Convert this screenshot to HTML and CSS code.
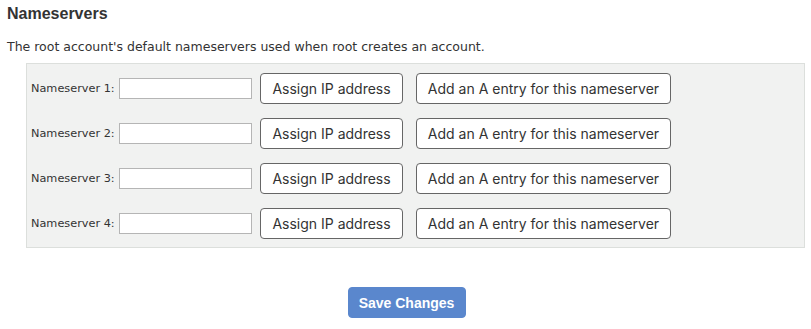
FILE: index.html
```html
<!DOCTYPE html>
<html lang="en">
<head>
    <meta charset="UTF-8">
    <title>Nameservers</title>
    <link rel="stylesheet" href="styles.css">
</head>
<body>
    <h2 class="section-title">Nameservers</h2>
    <p class="section-desc">The root account's default nameservers used when root creates an account.</p>

    <div class="ns-panel">
        <div class="ns-row">
            <label class="ns-label" for="ns1">Nameserver 1:</label>
            <input class="ns-input" id="ns1" type="text">
            <button class="btn" type="button">Assign IP address</button>
            <button class="btn btn-wide" type="button">Add an A entry for this nameserver</button>
        </div>
        <div class="ns-row">
            <label class="ns-label" for="ns2">Nameserver 2:</label>
            <input class="ns-input" id="ns2" type="text">
            <button class="btn" type="button">Assign IP address</button>
            <button class="btn btn-wide" type="button">Add an A entry for this nameserver</button>
        </div>
        <div class="ns-row">
            <label class="ns-label" for="ns3">Nameserver 3:</label>
            <input class="ns-input" id="ns3" type="text">
            <button class="btn" type="button">Assign IP address</button>
            <button class="btn btn-wide" type="button">Add an A entry for this nameserver</button>
        </div>
        <div class="ns-row">
            <label class="ns-label" for="ns4">Nameserver 4:</label>
            <input class="ns-input" id="ns4" type="text">
            <button class="btn" type="button">Assign IP address</button>
            <button class="btn btn-wide" type="button">Add an A entry for this nameserver</button>
        </div>
    </div>

    <div class="actions">
        <button class="btn-primary" type="submit">Save Changes</button>
    </div>
</body>
</html>
```

FILE: styles.css
```css
body {
    margin: 0;
    padding: 0 6px 0 7px;
    font-family: "DejaVu Sans", Verdana, sans-serif;
    color: #333;
    background-color: #fff;
}

.section-title {
    font-family: "Liberation Sans", Arial, sans-serif;
    font-size: 16px;
    font-weight: bold;
    line-height: 20px;
    margin: 4px 0 0;
    color: #333;
}

.section-desc {
    font-size: 12.5px;
    line-height: 16px;
    margin: 15px 0 0;
}

.ns-panel {
    margin: 8px 0 0 19px;
    padding: 9px 4px 8px;
    background-color: #f1f2f1;
    border: 1px solid #dcdfdc;
}

.ns-row {
    display: flex;
    align-items: center;
    height: 31px;
}

    .ns-row + .ns-row {
        margin-top: 14px;
    }

.ns-label {
    font-size: 11.3px;
    width: 83px;
    margin-right: 5px;
    white-space: nowrap;
}

.ns-input {
    box-sizing: border-box;
    width: 133px;
    height: 21px;
    margin: 0 8px 0 0;
    padding: 2px 3px;
    border: 1px solid #b5b5b5;
    background-color: #fff;
}

.btn {
    box-sizing: border-box;
    width: 143px;
    height: 31px;
    margin-right: 13px;
    padding: 0;
    font-family: Inter, "Liberation Sans", sans-serif;
    font-size: 14px;
    color: #333;
    background-color: #fff;
    border: 1px solid #666;
    border-radius: 4px;
}

.btn-wide {
    width: 255px;
}

.actions {
    display: flex;
    justify-content: center;
    margin-top: 39px;
    padding-left: 1px;
}

.btn-primary {
    box-sizing: border-box;
    width: 118px;
    height: 31px;
    font-family: "Liberation Sans", Arial, sans-serif;
    font-size: 14px;
    font-weight: bold;
    color: #fff;
    background-color: #5a87cd;
    border: 1px solid #5a87cd;
    border-radius: 4px;
}
```
